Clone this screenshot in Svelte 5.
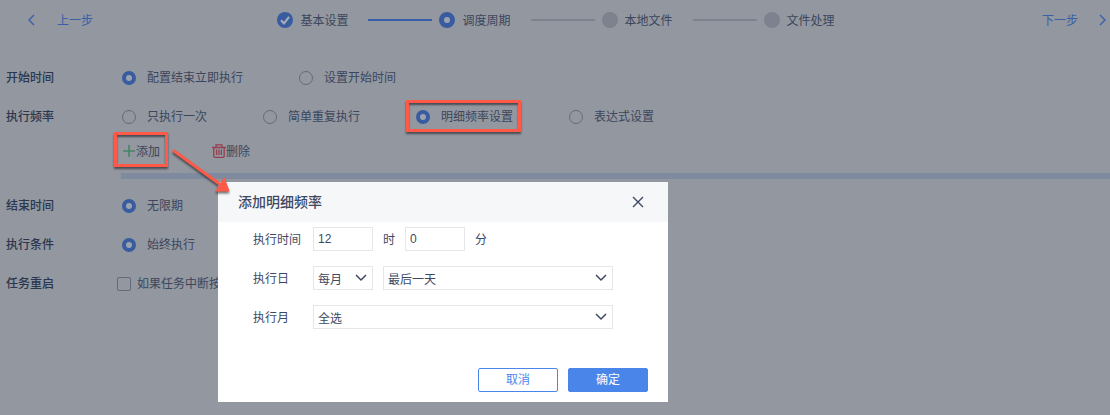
<script>
	let steps = [
		{ title: '基本设置', state: 'done' },
		{ title: '调度周期', state: 'active' },
		{ title: '本地文件', state: 'wait' },
		{ title: '文件处理', state: 'wait' }
	];

	let startOptions = ['配置结束立即执行', '设置开始时间'];
	let frequencyOptions = ['只执行一次', '简单重复执行', '明细频率设置', '表达式设置'];

	let start = '配置结束立即执行';
	let frequency = '明细频率设置';
	let end = '无限期';
	let condition = '始终执行';
	let restart = false;

	let showDialog = true;
	let hour = '12';
	let minute = '0';

	function openDialog() {
		showDialog = true;
	}

	function closeDialog() {
		showDialog = false;
	}
</script>

<div class="page">
	<header class="topbar">
		<button class="nav" type="button">
			<svg width="7" height="12" viewBox="0 0 7 12"><path d="M6 1 1 6l5 5" /></svg>
			<span class="text">上一步</span>
		</button>
		<ol class="steps">
			{#each steps as step}
				<li class="step {step.state}">
					<span class="dot">
						{#if step.state === 'done'}
							<svg width="16" height="16" viewBox="0 0 16 16"><path d="m4 8.2 3 3.2 5-6.6" /></svg>
						{/if}
					</span>
					<span class="text">{step.title}</span>
				</li>
			{/each}
		</ol>
		<button class="nav next" type="button">
			<span class="text">下一步</span>
			<svg width="7" height="12" viewBox="0 0 7 12"><path d="m1 1 5 5-5 5" /></svg>
		</button>
	</header>

	<form class="settings">
		<div class="row">
			<span class="name">开始时间</span>
			<div class="options">
				{#each startOptions as option}
					<label class="option">
						<input type="radio" name="start" value={option} bind:group={start} />
						{option}
					</label>
				{/each}
			</div>
		</div>
		<div class="row">
			<span class="name">执行频率</span>
			<div class="options">
				{#each frequencyOptions as option}
					<label class="option" class:marked={option === '明细频率设置'}>
						<input type="radio" name="frequency" value={option} bind:group={frequency} />
						{option}
					</label>
				{/each}
			</div>
		</div>

		<div class="detail">
			<div class="toolbar">
				<button class="tool marked" type="button" on:click={openDialog}>
					<svg class="plus" width="14" height="14" viewBox="0 0 14 14"><path d="M7 1v12M1 7h12" /></svg>
					<span class="text">添加</span>
				</button>
				<svg class="arrow" width="64" height="52" viewBox="0 0 64 52">
					<path class="shaft" d="M4 5 51 39" />
					<path class="head" d="M59 45 46 45l4-6 4-7z" />
				</svg>
				<button class="tool" type="button">
					<svg class="trash" width="14" height="14" viewBox="0 0 14 14">
						<path d="M0 3.5h14M4 3.2V.8h6v2.4M1.8 4v8q0 1.3 1.3 1.3h7.8q1.3 0 1.3-1.3V4M4.6 5.5v5.5M7 5.5v5.5M9.4 5.5v5.5" />
					</svg>
					<span class="text">删除</span>
				</button>
			</div>
			<div class="table-head"></div>
		</div>

		<div class="row">
			<span class="name">结束时间</span>
			<label class="option">
				<input type="radio" name="end" value="无限期" bind:group={end} />
				无限期
			</label>
		</div>
		<div class="row">
			<span class="name">执行条件</span>
			<label class="option">
				<input type="radio" name="condition" value="始终执行" bind:group={condition} />
				始终执行
			</label>
		</div>
		<div class="row">
			<span class="name">任务重启</span>
			<label class="option check">
				<input type="checkbox" bind:checked={restart} />
				如果任务中断按
			</label>
		</div>
	</form>

	{#if showDialog}
		<div class="dialog" role="dialog" aria-labelledby="dialog-title">
			<div class="dialog-head">
				<h2 id="dialog-title">添加明细频率</h2>
				<button class="close" type="button" aria-label="关闭" on:click={closeDialog}>
					<svg width="12" height="12" viewBox="0 0 12 12"><path d="m1 1 10 10M11 1 1 11" /></svg>
				</button>
			</div>
			<div class="dialog-body">
				<div class="field">
					<label for="hour">执行时间</label>
					<input id="hour" type="text" bind:value={hour} />
					<label class="unit" for="hour">时</label>
					<input id="minute" type="text" bind:value={minute} />
					<label class="unit" for="minute">分</label>
				</div>
				<div class="field">
					<label for="cycle">执行日</label>
					<div class="select short">
						<select id="cycle"><option>每月</option></select>
						<svg width="12" height="8" viewBox="0 0 12 8"><path d="m1 1 5 5 5-5" /></svg>
					</div>
					<div class="select">
						<select aria-label="执行日"><option>最后一天</option></select>
						<svg width="12" height="8" viewBox="0 0 12 8"><path d="m1 1 5 5 5-5" /></svg>
					</div>
				</div>
				<div class="field">
					<label for="month">执行月</label>
					<div class="select">
						<select id="month"><option>全选</option></select>
						<svg width="12" height="8" viewBox="0 0 12 8"><path d="m1 1 5 5 5-5" /></svg>
					</div>
				</div>
			</div>
			<div class="dialog-foot">
				<button class="btn" type="button" on:click={closeDialog}>取消</button>
				<button class="btn primary" type="button" on:click={closeDialog}>确定</button>
			</div>
		</div>
	{/if}
</div>

<style>
	:global(body) {
		background: #9297a0;
	}

	.page {
		position: relative;
		min-height: 100vh;
		font-family: "Liberation Sans", "Noto Sans CJK SC", sans-serif;
		font-size: 12px;
		line-height: 18px;
		color: #3c465c;
	}

	button,
	input,
	select {
		box-sizing: border-box;
		margin: 0;
		font: inherit;
		color: inherit;
	}

	button {
		padding: 0;
		border: 0;
		background: none;
		cursor: pointer;
	}

	svg {
		display: block;
		fill: none;
		stroke: currentColor;
	}

	.text {
		padding-top: 2px;
	}

	.topbar {
		display: grid;
		grid-template-columns: 1fr auto 1fr;
		align-items: center;
		height: 40px;
		padding: 0 4px 0 28px;
	}

	.nav {
		display: flex;
		align-items: center;
		justify-self: start;
		gap: 22px;
		color: #385fa8;
	}

	.nav svg {
		stroke-width: 1.4;
	}

	.nav.next {
		justify-self: end;
		gap: 21px;
	}

	.steps {
		display: flex;
		margin: 0 22px 0 0;
		padding: 0;
		list-style: none;
	}

	.step {
		display: flex;
		align-items: center;
		gap: 7px;
	}

	.step:not(:last-child)::after {
		content: "";
		width: 64px;
		height: 2px;
		margin-left: 13px;
		background: #7d828e;
	}

	.step + .step {
		margin-left: 7px;
	}

	.step.done:not(:last-child)::after {
		background: #385fa8;
	}

	.dot {
		box-sizing: border-box;
		width: 16px;
		height: 16px;
		border-radius: 50%;
		background: #7d828e;
	}

	.done .dot {
		background: #385c9f;
		color: #a9aeb8;
	}

	.done .dot svg {
		stroke-width: 2;
	}

	.active .dot {
		border: 5px solid #385c9f;
		background: #9ca3af;
	}

	.settings {
		padding: 18px 0 0 6px;
	}

	.row {
		display: flex;
		align-items: center;
		height: 39px;
	}

	.name {
		width: 116px;
		font-weight: 500;
		color: #2c364e;
	}

	.options {
		display: flex;
		gap: 56px;
	}

	.option {
		position: relative;
		display: flex;
		align-items: center;
		gap: 11px;
	}

	.option input {
		appearance: none;
		width: 14px;
		height: 14px;
		border: 1px solid #646b7c;
		border-radius: 50%;
	}

	.option input:checked {
		border: 4px solid #385c9f;
		background: #9ca3af;
	}

	.option.check {
		gap: 6px;
		margin-left: -5px;
	}

	.option.check input {
		border-radius: 2px;
	}

	.detail {
		padding: 0 0 7px 115px;
	}

	.toolbar {
		position: relative;
		display: flex;
		gap: 52px;
		height: 30px;
		margin-bottom: 7px;
		padding-left: 1px;
	}

	.tool {
		position: relative;
		display: flex;
		align-items: center;
	}

	.plus {
		color: #478565;
		stroke-width: 1.6;
	}

	.trash {
		color: #953f4c;
		stroke-width: 1.3;
	}

	.table-head {
		height: 6px;
		background: #808a9f;
	}

	.marked::after {
		content: "";
		position: absolute;
		inset: -8px -8px -6px -10px;
		border: 3px solid #ff5a48;
		box-shadow: 0 2px 2px rgba(0, 0, 0, 0.5), inset 0 2px 2px rgba(0, 0, 0, 0.5);
		pointer-events: none;
	}

	.tool.marked::after {
		inset: -4px -8px -1px;
	}

	.arrow {
		position: absolute;
		left: 49px;
		top: 10px;
		z-index: 2;
		filter: drop-shadow(0 2px 1px rgba(0, 0, 0, 0.55));
		pointer-events: none;
	}

	.shaft {
		stroke: #ff5a48;
		stroke-width: 3;
		stroke-linecap: round;
	}

	.head {
		fill: #ff5a48;
		stroke: #ff5a48;
		stroke-width: 1;
	}

	.dialog {
		position: absolute;
		left: 218px;
		top: 182px;
		z-index: 1;
		width: 450px;
		background: #fff;
		color: #3d4963;
	}

	.dialog-head {
		display: flex;
		align-items: center;
		justify-content: space-between;
		height: 40px;
		padding: 0 24px 0 20px;
		background: #f6f7f9;
	}

	h2 {
		margin: 0;
		font-size: 14px;
		font-weight: 500;
		line-height: 20px;
	}

	.close svg {
		stroke-width: 1.4;
	}

	.dialog-body {
		display: flex;
		flex-direction: column;
		gap: 15px;
		padding: 5px 55px 0 35px;
	}

	.field {
		display: flex;
		gap: 10px;
		height: 24px;
		line-height: 26px;
	}

	.field label {
		width: 50px;
	}

	.field .unit {
		width: 12px;
	}

	.field input,
	.field select {
		width: 60px;
		height: 24px;
		padding: 0 4px;
		border: 1px solid #e4e6ea;
		border-radius: 0;
		background: #fff;
	}

	.select {
		position: relative;
		flex: 1;
	}

	.select.short {
		flex: 0 0 60px;
	}

	.field select {
		display: block;
		appearance: none;
		width: 100%;
	}

	.select svg {
		position: absolute;
		right: 6px;
		top: 8px;
		stroke-width: 1.5;
		pointer-events: none;
	}

	.dialog-foot {
		display: flex;
		justify-content: flex-end;
		gap: 10px;
		padding: 39px 20px 10px;
	}

	.btn {
		width: 80px;
		height: 24px;
		border: 1px solid #4a86ea;
		border-radius: 2px;
		color: #4a86ea;
	}

	.btn.primary {
		background: #4a86ea;
		color: #fff;
	}
</style>
